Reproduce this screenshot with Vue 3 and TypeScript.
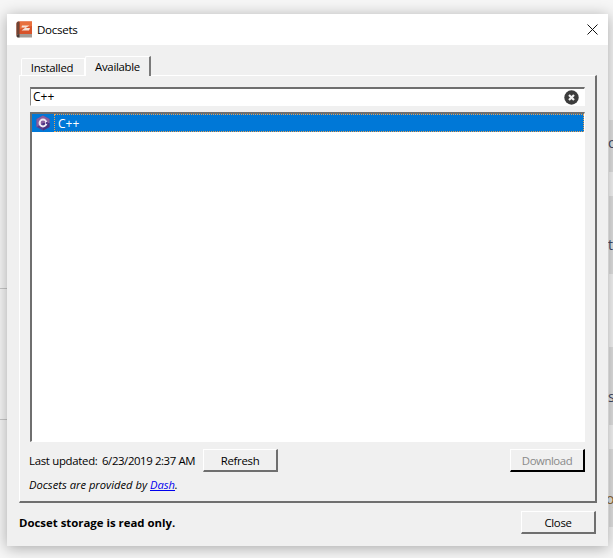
<script setup lang="ts">
const query = 'C++'
const lastUpdated = '6/23/2019 2:37 AM'
</script>

<template>
  <div class="desktop">
    <i class="bg-line left-a"></i>
    <i class="bg-line left-b"></i>
    <i class="bg-band band-a"></i>
    <i class="bg-band band-b"></i>
    <i class="bg-band band-c"></i>
    <i class="bg-band band-d"></i>
    <span class="bg-text t1">o</span>
    <span class="bg-text t2">t</span>
    <span class="bg-text t3">s</span>
    <span class="bg-text t4">oj</span>

    <section class="dialog">
      <header class="titlebar">
        <svg class="app-icon" width="17" height="17" viewBox="0 0 17 17">
          <path d="M0.5 2.5 Q0.5 0.5 2.5 0.5 H16 V13.5 H3 Q0.5 13.5 0.5 15 Z" fill="#d8532a" />
          <path d="M4 0.5 H16 V5 L4 8 Z" fill="#e8703c" />
          <path d="M0.5 2.5 Q0.5 0.5 2.5 0.5 H3.5 V13 H2.5 Q0.5 13 0.5 15 Z" fill="#6e4436" />
          <path d="M0.5 15 Q0.5 13 3 13 H16 V16.5 H3 Q0.5 16.5 0.5 15 Z" fill="#a39c96" />
          <path d="M0.5 15 Q0.5 13 3 13 H3.5 V16.5 H3 Q0.5 16.5 0.5 15 Z" fill="#4a3a34" />
          <path d="M6 4.5 H13.5 L9.5 7 H14 L13 9.5 H5.5 L9.5 6.6 H5.5 Z" fill="#f6e2d6" />
        </svg>
        <span class="title">Docsets</span>
        <svg class="close-x" width="11" height="11" viewBox="0 0 11 11">
          <path d="M0.5 0.5 L10.5 10.5 M10.5 0.5 L0.5 10.5" stroke="#111" stroke-width="1" fill="none" />
        </svg>
      </header>

      <div class="body">
        <div class="tabs">
          <div class="tab">Installed</div>
          <div class="tab active">Available</div>
        </div>

        <div class="pane">
          <div class="search">
            <span class="query">{{ query }}</span>
            <svg width="15" height="15" viewBox="0 0 15 15">
              <circle cx="7.5" cy="7.5" r="7.2" fill="#3c3c3c" />
              <path d="M5 5 L10 10 M10 5 L5 10" stroke="#f2f2f2" stroke-width="2.2" fill="none" />
            </svg>
          </div>

          <div class="list">
            <div class="row">
              <svg class="row-icon" width="16" height="16" viewBox="0 0 16 16">
                <path d="M8 0.5 L14.5 4 V12 L8 15.5 L1.5 12 V4 Z" fill="#5a3f8f" />
                <path d="M8 0.5 L14.5 4 V8 H8 L1.5 12 V4 Z" fill="#8a5f9f" />
                <path d="M8 8 H14.5 V12 L8 15.5 Z" fill="#4a3480" />
                <circle cx="8" cy="8" r="3.4" fill="none" stroke="#efe9f4" stroke-width="2" />
                <path d="M11 7 H13 V9 H11 Z" fill="#5a3f8f" />
              </svg>
              <span class="row-label">{{ query }}</span>
            </div>
          </div>

          <div class="actions">
            <span class="updated-label">Last updated:</span>
            <span class="updated-value">{{ lastUpdated }}</span>
            <button class="btn" type="button">Refresh</button>
            <button class="btn disabled" type="button">Download</button>
          </div>
          <p class="credit">Docsets are provided by <a href="#">Dash</a>.</p>
        </div>

        <footer class="footer">
          <strong>Docset storage is read only.</strong>
          <button class="btn" type="button">Close</button>
        </footer>
      </div>
    </section>
  </div>
</template>

<style>
html, body { margin: 0; background: #fff; }
</style>

<style scoped>
.desktop {
  position: relative;
  width: 613px;
  height: 558px;
  overflow: hidden;
  background: #f6f6f6;
  font-family: "Open Sans", "Noto Sans", sans-serif;
  font-size: 11.4px;
  letter-spacing: -0.3px;
  color: #000;
}
.bg-line { position: absolute; left: 0; width: 8px; height: 1px; background: #c8c8c8; }
.left-a { top: 288px; }
.left-b { top: 419px; }
.bg-band { position: absolute; left: 609px; width: 4px; background: #e2e2e2; }
.band-a { top: 120px; height: 52px; }
.band-b { top: 196px; height: 78px; }
.band-c { top: 347px; height: 78px; }
.band-d { top: 449px; height: 78px; }
.bg-text { position: absolute; left: 608px; color: #3f4a66; font-size: 14px; line-height: 16px; }
.t1 { top: 135px; }
.t2 { top: 237px; }
.t3 { top: 389px; }
.t4 { top: 491px; left: 606px; color: #8a6a3a; }

.dialog {
  position: absolute;
  left: 7px;
  top: 14px;
  width: 601px;
  height: 532px;
  display: flex;
  flex-direction: column;
  background: #f0f0f0;
  box-shadow: 0 2px 14px rgba(0, 0, 0, 0.32);
}
.titlebar {
  height: 31px;
  flex: none;
  background: #fff;
  display: flex;
  align-items: center;
  padding: 0 10px 0 9px;
}
.app-icon { margin-right: 4px; }
.title { flex: 1; font-size: 11.6px; }
.body {
  flex: 1;
  display: flex;
  flex-direction: column;
  padding: 11px 11px 0 12px;
}
.tabs {
  display: flex;
  align-items: flex-end;
  height: 19px;
  padding-left: 2px;
  position: relative;
  z-index: 1;
}
.tab {
  width: 64px;
  height: 17px;
  box-sizing: border-box;
  border: 1px solid #fff;
  border-bottom: 0;
  border-radius: 2px 0 0 0;
  padding-right: 2px;
  text-align: center;
  line-height: 18px;
}
.tab.active {
  width: 66px;
  height: 20px;
  background: #f0f0f0;
  border-right: 2px solid #7a7a7a;
  padding-right: 0;
  line-height: 20px;
  margin-bottom: -1px;
}
.pane {
  box-sizing: border-box;
  height: 428px;
  border: 1px solid;
  border-color: #fff #6f6f6f #6f6f6f #fff;
  border-width: 1px 2px 2px 1px;
  padding: 11px 10px 0 10px;
  display: flex;
  flex-direction: column;
}
.search {
  box-sizing: border-box;
  height: 19px;
  flex: none;
  background: #fff;
  border: 1px solid #fff;
  border-top: 2px solid #6f6f6f;
  border-left: 1px solid #8a8a8a;
  display: flex;
  align-items: center;
  justify-content: space-between;
  padding: 0 5px 0 2px;
}
.query { font-size: 12px; line-height: 16px; letter-spacing: 0; }
.list {
  box-sizing: border-box;
  height: 330px;
  flex: none;
  margin-top: 6px;
  background: #fff;
  border: 2px solid #6f6f6f;
  border-right: 1px solid #fff;
  border-bottom: 1px solid #fff;
}
.row {
  height: 18px;
  background: #0078d7;
  display: flex;
  align-items: center;
  padding-left: 3px;
}
.row-icon { flex: none; }
.row-label {
  flex: 1;
  height: 18px;
  box-sizing: border-box;
  margin-left: 3px;
  padding-left: 3px;
  line-height: 17px;
  font-size: 12px;
  letter-spacing: 0;
  color: #fff;
  border: 1px dotted #e8a050;
}
.actions {
  display: flex;
  align-items: center;
  height: 23px;
  margin-top: 7px;
  white-space: nowrap;
}
.updated-label { margin-left: -1px; width: 73px; }
.updated-value { width: 101px; letter-spacing: -0.4px; }
.btn {
  box-sizing: border-box;
  width: 75px;
  height: 23px;
  padding: 0;
  font: inherit;
  letter-spacing: inherit;
  color: #000;
  background: #f0f0f0;
  border: 1px solid;
  border-color: #fff #6f6f6f #6f6f6f #fff;
  border-width: 1px 2px 2px 1px;
}
.btn.disabled {
  margin-left: auto;
  color: #8a8a8a;
  letter-spacing: -0.45px;
  border-color: #fff #000 #000 #fff;
}
.credit { margin: 5px 0 0 -1px; font-style: italic; font-size: 11.2px; letter-spacing: 0; line-height: 16px; }
.credit a { color: #0000ee; }
.footer {
  display: flex;
  align-items: center;
  justify-content: space-between;
  margin-top: 8px;
  padding-right: 1px;
}
.footer strong { font-weight: 700; letter-spacing: 0; }
</style>
